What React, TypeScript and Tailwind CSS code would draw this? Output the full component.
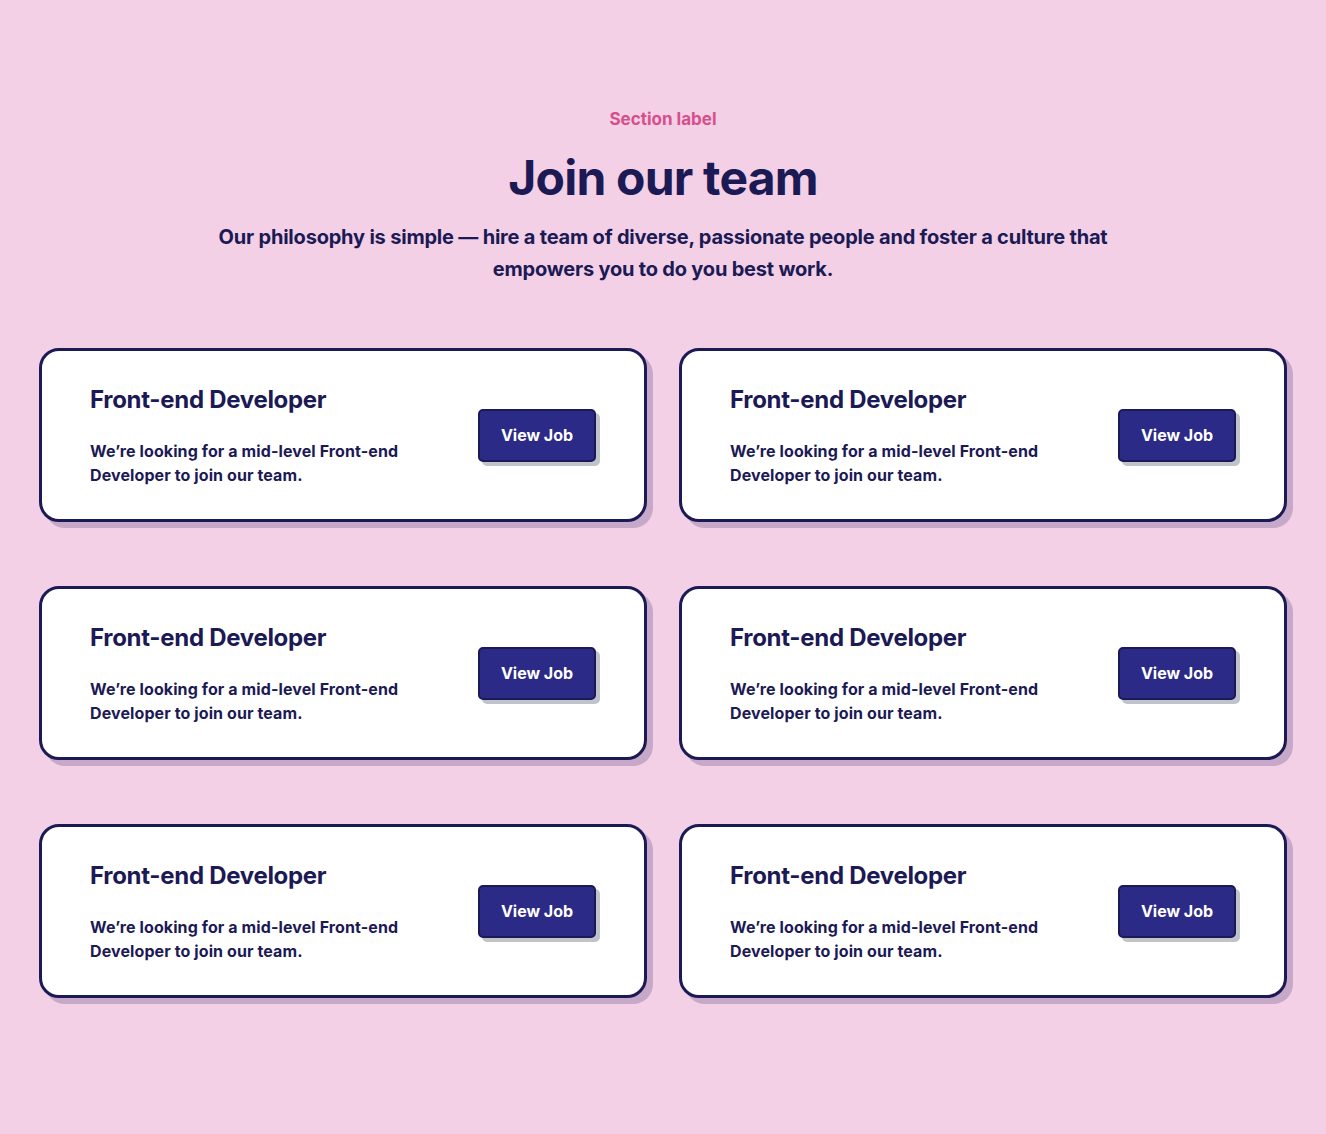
import React from 'react';

interface Job {
  title: string;
  description: string;
}

const jobs: Job[] = Array.from({ length: 6 }, () => ({
  title: 'Front-end Developer',
  description: 'We\u2019re looking for a mid-level Front-end Developer to join our team.',
}));

const JobCard: React.FC<{ job: Job }> = ({ job }) => (
  <div className="flex items-center justify-between rounded-[20px] border-[3px] border-[#1b1a55] bg-white px-12 py-8 shadow-[6px_6px_0_0_#c6a9c9]">
    <div className="max-w-[330px]">
      <h3 className="pt-[2px] text-[24px] font-bold leading-[30px] tracking-[-0.3px] text-[#1b1a55]">{job.title}</h3>
      <p className="mt-6 text-[16px] font-bold leading-6 tracking-[0.1px] text-[#1b1a55]">{job.description}</p>
    </div>
    <button className="h-[53px] w-[118px] rounded-[5px] border-2 border-[#1b1a55] bg-[#2b2a87] text-[16px] font-bold text-white shadow-[4px_4px_0_0_#bfc3cc]">
      View Job
    </button>
  </div>
);

export default function App() {
  return (
    <div
      className="min-h-[1134px] bg-[#f3d0e6] px-[39px] pt-[107px] pb-24"
      style={{ fontFamily: 'Inter, "Noto Sans", sans-serif' }}
    >
      <div className="text-center">
        <p className="text-[17px] font-bold leading-6 text-[#d64f8c]">Section label</p>
        <h1 className="mt-[23px] text-[48px] font-bold leading-[48px] tracking-[-0.8px] text-[#1b1a55]">
          Join our team
        </h1>
        <p className="mx-auto mt-[19px] max-w-[900px] text-[20px] font-bold leading-8 tracking-[-0.2px] text-[#1b1a55]">
          Our philosophy is simple — hire a team of diverse, passionate people and foster a culture that empowers you to do you best work.
        </p>
      </div>

      <div className="mx-auto mt-[63px] grid max-w-[1248px] grid-cols-2 gap-x-8 gap-y-16">
        {jobs.map((job, i) => (
          <JobCard key={i} job={job} />
        ))}
      </div>
    </div>
  );
}
